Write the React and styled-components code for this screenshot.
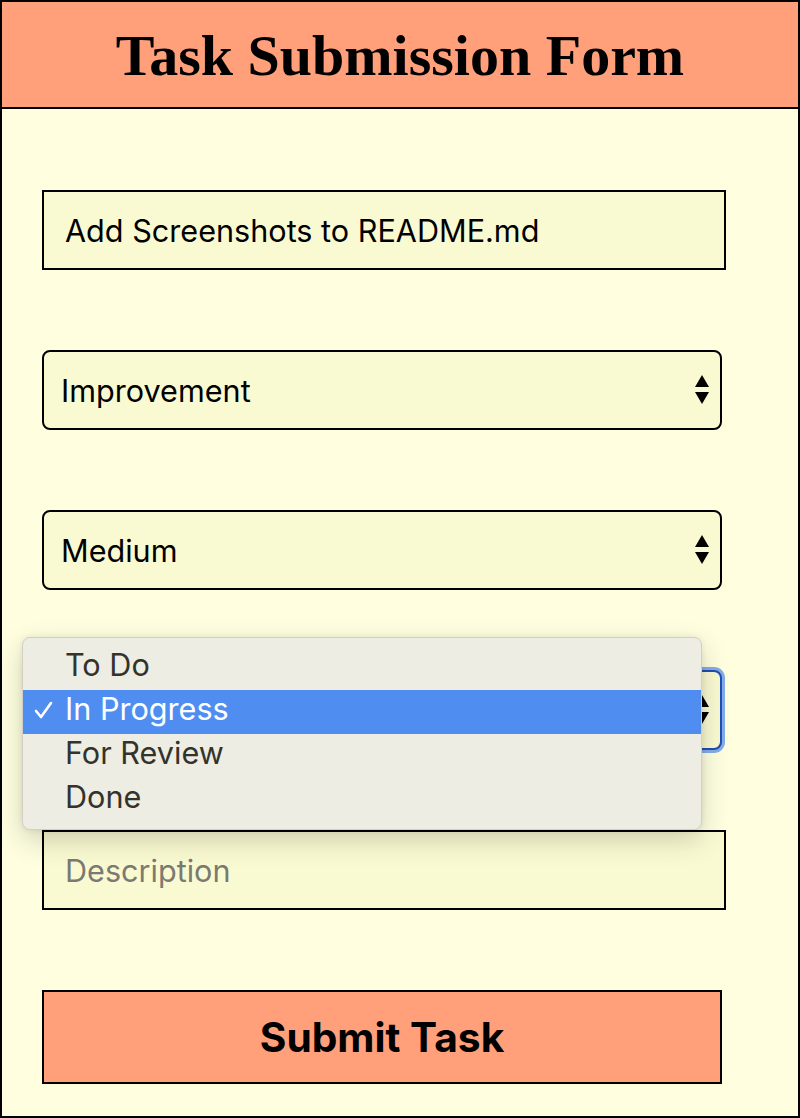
import React from 'react';
import styled, { createGlobalStyle, css } from 'styled-components';

const GlobalStyle = createGlobalStyle`
  html, body {
    margin: 0;
    padding: 0;
    background: #ffffe0;
  }
  * { box-sizing: border-box; }
`;

const Page = styled.div`
  width: 800px;
  height: 1118px;
  border: 2px solid #000;
  background: #ffffe0;
  font-family: Inter, "Liberation Sans", sans-serif;
`;

const Header = styled.header`
  height: 107px;
  background: #ffa07a;
  border-bottom: 2px solid #000;
  display: flex;
  align-items: center;
  justify-content: center;
`;

const Title = styled.h1`
  margin: 0;
  font-family: "Liberation Serif", "Times New Roman", serif;
  font-weight: bold;
  font-size: 58px;
  color: #000;
  padding-top: 2px;
`;

const Form = styled.form`
  display: flex;
  flex-direction: column;
  align-items: flex-start;
  gap: 80px;
  padding: 81px 40px 0 40px;
`;

const fieldBase = css`
  height: 80px;
  border: 2px solid #000;
  background: #fafad2;
  font-family: Inter, "Liberation Sans", sans-serif;
  font-size: 30.6px;
  color: #000;
  display: flex;
  align-items: center;
`;

const TextInput = styled.div`
  ${fieldBase};
  width: 684px;
  padding: 0 21px;
  color: ${props => (props.placeholder ? '#7a7a72' : '#000')};
`;

const SelectBox = styled.div`
  ${fieldBase};
  width: 680px;
  border-radius: 8px;
  padding: 0 10px 0 17px;
  justify-content: space-between;
  ${props => props.focused && css`
    border-color: #1f4fb4;
    box-shadow: 0 0 0 3px rgba(92, 144, 236, 0.75);
  `}
`;

const SelectWrap = styled.div`
  position: relative;
`;

const Popup = styled.ul`
  position: absolute;
  left: -20px;
  top: -33px;
  width: 680px;
  margin: 0;
  padding: 8px 0 7px;
  list-style: none;
  background: #ededE3;
  border: 1px solid #d0d0c6;
  border-radius: 8px;
  box-shadow: 0 10px 28px rgba(0, 0, 0, 0.18), 0 0 6px rgba(0, 0, 0, 0.08);
  z-index: 5;
`;

const Option = styled.li`
  height: 44px;
  display: flex;
  align-items: center;
  padding: 0 0 7px 42px;
  position: relative;
  font-size: 30.6px;
  color: ${props => (props.selected ? '#fff' : '#33332c')};
  background: ${props => (props.selected ? '#4f8ef0' : 'transparent')};
`;

const Check = styled.svg`
  position: absolute;
  left: 11px;
  top: 10px;
`;

const SubmitButton = styled.button`
  width: 680px;
  height: 94px;
  border: 2px solid #000;
  background: #ffa07a;
  font-family: Inter, "Liberation Sans", sans-serif;
  font-size: 40.7px;
  font-weight: bold;
  color: #000;
  cursor: pointer;
`;

const Arrows = () => (
  <svg width="16" height="30" viewBox="0 0 16 30">
    <polygon points="8,0 15,12 1,12" fill="#000" />
    <polygon points="1,17 15,17 8,29" fill="#000" />
  </svg>
);

const statuses = ['To Do', 'In Progress', 'For Review', 'Done'];

export default function App() {
  return (
    <Page>
      <GlobalStyle />
      <Header>
        <Title>Task Submission Form</Title>
      </Header>
      <Form onSubmit={e => e.preventDefault()}>
        <TextInput>Add Screenshots to README.md</TextInput>
        <SelectBox>
          Improvement
          <Arrows />
        </SelectBox>
        <SelectBox>
          Medium
          <Arrows />
        </SelectBox>
        <SelectWrap>
          <SelectBox focused>
            In Progress
            <Arrows />
          </SelectBox>
          <Popup>
            {statuses.map(s => (
              <Option key={s} selected={s === 'In Progress'}>
                {s === 'In Progress' && (
                  <Check width="20" height="20" viewBox="0 0 20 20">
                    <polyline points="2,11 7,17 17,3" fill="none" stroke="#fff" strokeWidth="2.6" strokeLinecap="round" strokeLinejoin="round" />
                  </Check>
                )}
                {s}
              </Option>
            ))}
          </Popup>
        </SelectWrap>
        <TextInput placeholder="Description">Description</TextInput>
        <SubmitButton type="submit">Submit Task</SubmitButton>
      </Form>
    </Page>
  );
}
